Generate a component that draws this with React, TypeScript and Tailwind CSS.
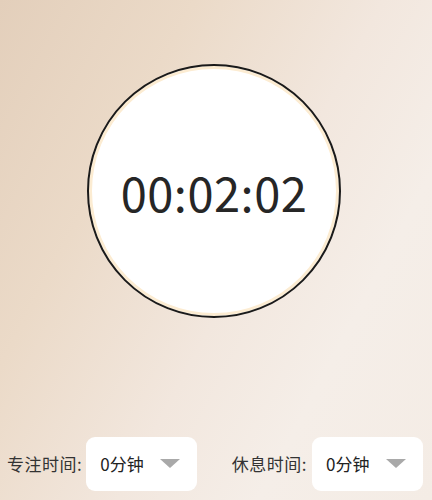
import React from "react";

function Select({ value }: { value: string }) {
  return (
    <div className="flex h-[54px] w-[111px] items-center justify-between rounded-[9px] bg-white pl-[14px] pr-[17px]">
      <span className="text-[17px] text-[#222]">{value}</span>
      <svg width="20" height="10" viewBox="0 0 20 10">
        <polygon points="0,0 20,0 10,9" fill="#a9a9a9" />
      </svg>
    </div>
  );
}

export default function App() {
  return (
    <div
      className="flex h-[500px] w-[432px] flex-col bg-[linear-gradient(118deg,#e3cfbb_0%,#ebdac8_28%,#f2e7de_55%,#f5eee8_75%,#f4ece5_100%)]"
      style={{ fontFamily: '"Noto Sans CJK SC", "Noto Sans", sans-serif' }}
    >
      <div className="mt-[64px] flex justify-center pr-[4px]">
        <div className="flex h-[254px] w-[254px] items-center justify-center rounded-full border-2 border-[#1a1a1a] bg-white shadow-[inset_0_0_0_3px_#fcecd2]">
          <span className="text-[47px] leading-none text-[#262626] tracking-[0.5px]">00:02:02</span>
        </div>
      </div>
      <div className="mt-[119px] flex items-center justify-between pl-[7px] pr-[9px]">
        <div className="flex items-center gap-[4px]">
          <span className="text-[17px] tracking-[0.5px] text-[#333]">专注时间:</span>
          <Select value="0分钟" />
        </div>
        <div className="flex items-center gap-[5px]">
          <span className="text-[17px] tracking-[0.5px] text-[#333]">休息时间:</span>
          <Select value="0分钟" />
        </div>
      </div>
    </div>
  );
}
